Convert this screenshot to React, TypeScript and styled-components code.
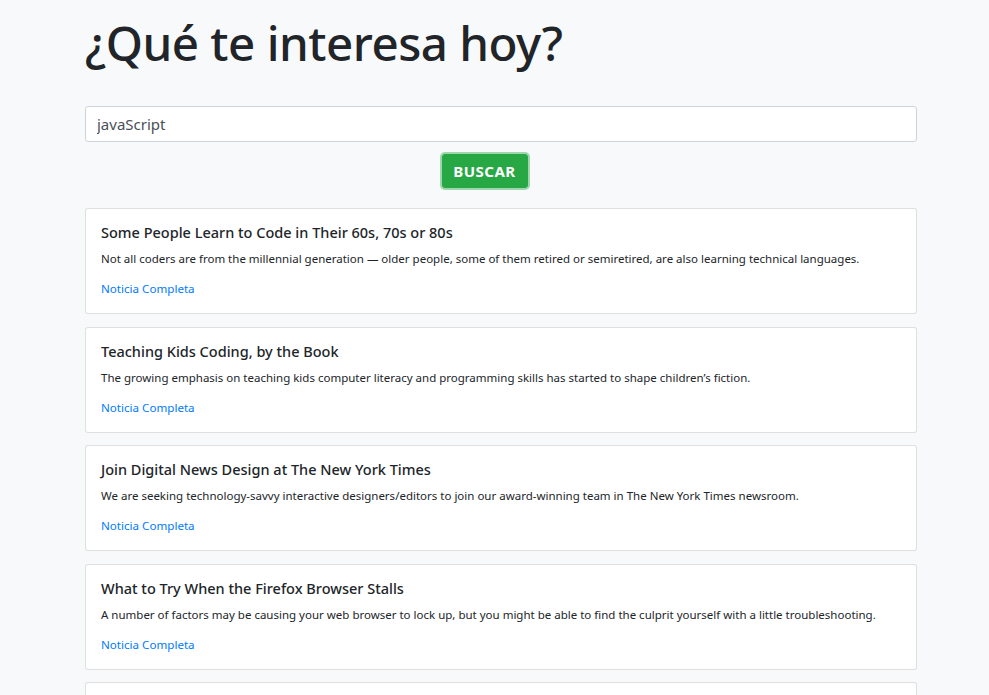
import React from "react";
import styled, { createGlobalStyle } from "styled-components";

const Global = createGlobalStyle`
  html, body { margin: 0; padding: 0; background: #f8f9fa; }
  body {
    font-family: "Noto Sans", "Open Sans", sans-serif;
    color: #212529;
    overflow: hidden;
  }
`;

const Container = styled.div`
  width: 832px;
  margin-left: 85px;
  padding-top: 14px;
`;

const Heading = styled.h1`
  margin: 0 0 35px 0;
  font-size: 47.5px;
  font-weight: 500;
  line-height: 1.2;
  color: #212529;
  letter-spacing: -0.5px;
`;

const Form = styled.form`
  display: flex;
  flex-direction: column;
  gap: 12px;
  margin-bottom: 20px;
`;

const Input = styled.input`
  box-sizing: border-box;
  width: 100%;
  height: 36px;
  padding: 0 11px;
  border: 1px solid #ced4da;
  border-radius: 3px;
  background: #fff;
  font-family: "Noto Sans", sans-serif;
  font-size: 15px;
  color: #495057;
  outline: none;
`;

const ButtonRow = styled.div`
  display: flex;
  justify-content: center;
  padding-right: 33px;
`;

const Button = styled.button`
  box-sizing: border-box;
  height: 34px;
  width: 86px;
  padding: 0;
  border: 1px solid #28a745;
  border-radius: 3px;
  background: #28a745;
  color: #fff;
  font-family: "Noto Sans", sans-serif;
  font-weight: 700;
  font-size: 15px;
  letter-spacing: 0.5px;
  text-transform: uppercase;
  box-shadow: 0 0 0 2px rgba(72, 180, 97, 0.5);
  cursor: pointer;
`;

const List = styled.div`
  display: flex;
  flex-direction: column;
  gap: 12.5px;
`;

const Card = styled.div`
  box-sizing: border-box;
  background: #fff;
  border: 1px solid rgba(0, 0, 0, 0.125);
  border-radius: 3px;
  padding: 13px 15px 15px;
  min-height: 106px;
`;

const Title = styled.h5`
  margin: 0 0 8px 0;
  font-size: 14.5px;
  font-weight: 500;
  line-height: 20px;
  color: #212529;
`;

const Text = styled.p`
  margin: 0 0 12px 0;
  font-size: 11.5px;
  line-height: 18px;
  color: #212529;
`;

const Link = styled.a`
  display: block;
  width: max-content;
  font-size: 11.6px;
  line-height: 18px;
  color: #007bff;
  text-decoration: none;
`;

const news = [
  {
    title: "Some People Learn to Code in Their 60s, 70s or 80s",
    text:
      "Not all coders are from the millennial generation — older people, some of them retired or semiretired, are also learning technical languages.",
  },
  {
    title: "Teaching Kids Coding, by the Book",
    text:
      "The growing emphasis on teaching kids computer literacy and programming skills has started to shape children’s fiction.",
  },
  {
    title: "Join Digital News Design at The New York Times",
    text:
      "We are seeking technology-savvy interactive designers/editors to join our award-winning team in The New York Times newsroom.",
  },
  {
    title: "What to Try When the Firefox Browser Stalls",
    text:
      "A number of factors may be causing your web browser to lock up, but you might be able to find the culprit yourself with a little troubleshooting.",
  },
  { title: "", text: "" },
];

export default function App() {
  return (
    <>
      <Global />
      <Container>
        <Heading>¿Qué te interesa hoy?</Heading>
        <Form onSubmit={(e) => e.preventDefault()}>
          <Input defaultValue="javaScript" />
          <ButtonRow>
            <Button type="submit">Buscar</Button>
          </ButtonRow>
        </Form>
        <List>
          {news.map((n, i) => (
            <Card key={i}>
              {n.title && (
                <>
                  <Title>{n.title}</Title>
                  <Text>{n.text}</Text>
                  <Link href="#">Noticia Completa</Link>
                </>
              )}
            </Card>
          ))}
        </List>
      </Container>
    </>
  );
}
